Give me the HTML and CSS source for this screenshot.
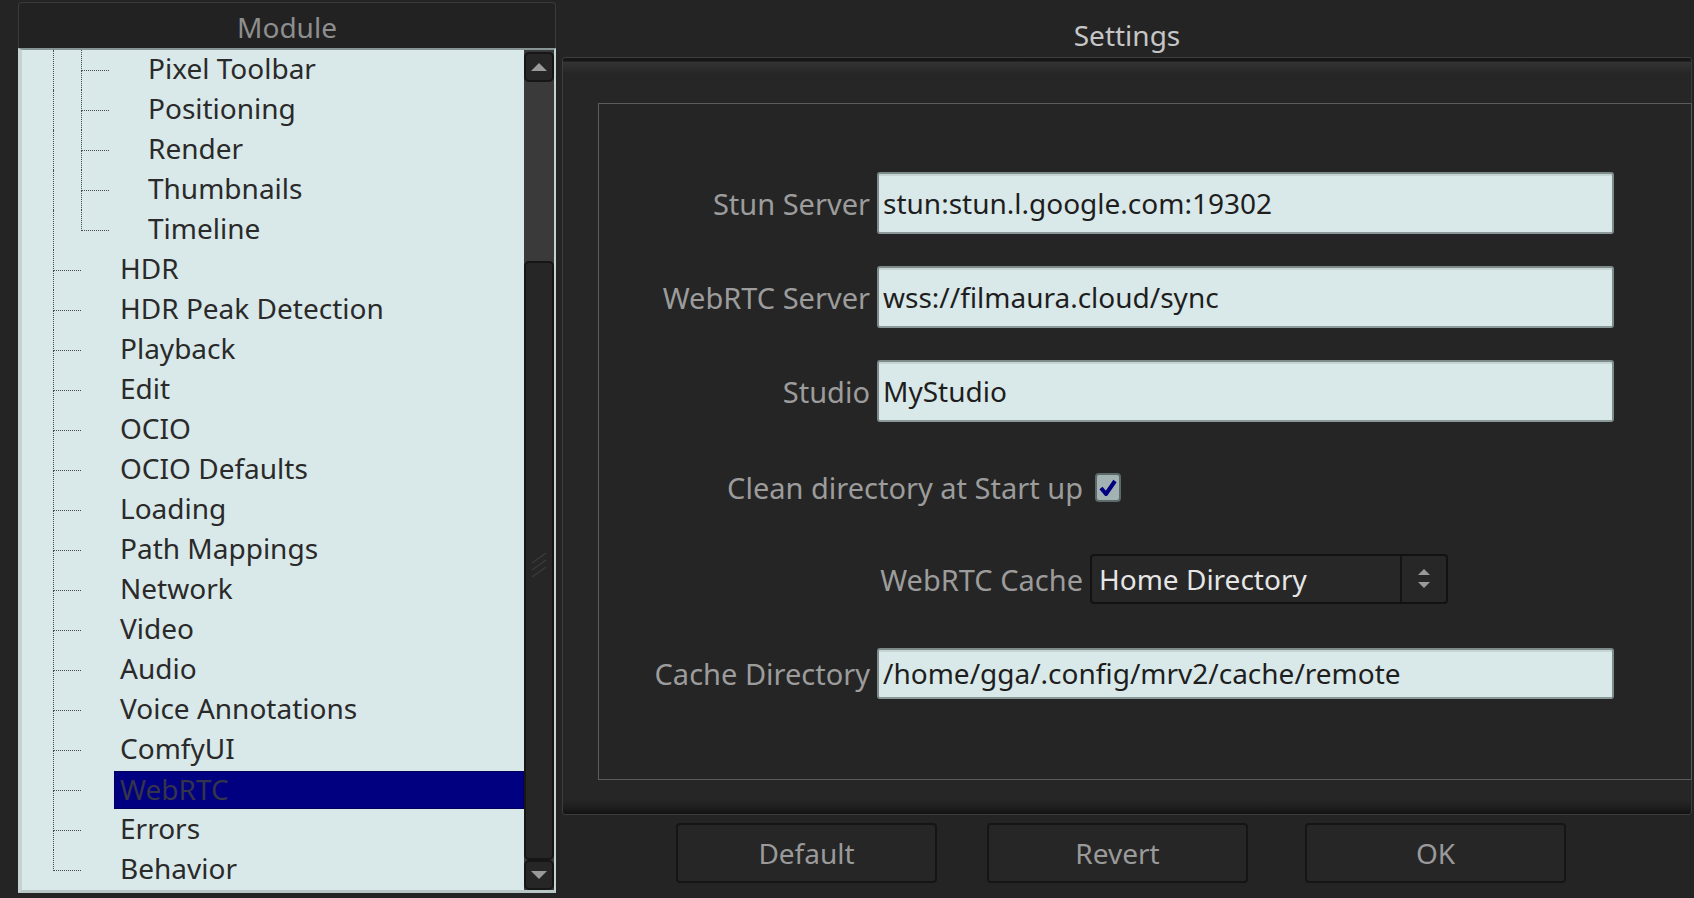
FILE: index.html
```html
<!DOCTYPE html>
<html lang="en">
<head>
    <meta charset="UTF-8">
    <meta name="viewport" content="width=device-width, initial-scale=1.0">
    <title>Preferences</title>
    <link rel="stylesheet" href="styles.css">
</head>
<body>
    <div class="app">
        <div class="modules">
            <div class="modules-title">Module</div>
            <div class="module-list">
                <div class="tree">
                    <div class="row sub"><span class="guide"></span><span class="branch"></span><span class="label">Pixel Toolbar</span></div>
                    <div class="row sub"><span class="guide"></span><span class="branch"></span><span class="label">Positioning</span></div>
                    <div class="row sub"><span class="guide"></span><span class="branch"></span><span class="label">Render</span></div>
                    <div class="row sub"><span class="guide"></span><span class="branch"></span><span class="label">Thumbnails</span></div>
                    <div class="row sub"><span class="guide"></span><span class="branch last"></span><span class="label">Timeline</span></div>
                    <div class="row"><span class="branch"></span><span class="label">HDR</span></div>
                    <div class="row"><span class="branch"></span><span class="label">HDR Peak Detection</span></div>
                    <div class="row"><span class="branch"></span><span class="label">Playback</span></div>
                    <div class="row"><span class="branch"></span><span class="label">Edit</span></div>
                    <div class="row"><span class="branch"></span><span class="label">OCIO</span></div>
                    <div class="row"><span class="branch"></span><span class="label">OCIO Defaults</span></div>
                    <div class="row"><span class="branch"></span><span class="label">Loading</span></div>
                    <div class="row"><span class="branch"></span><span class="label">Path Mappings</span></div>
                    <div class="row"><span class="branch"></span><span class="label">Network</span></div>
                    <div class="row"><span class="branch"></span><span class="label">Video</span></div>
                    <div class="row"><span class="branch"></span><span class="label">Audio</span></div>
                    <div class="row"><span class="branch"></span><span class="label">Voice Annotations</span></div>
                    <div class="row"><span class="branch"></span><span class="label">ComfyUI</span></div>
                    <div class="row"><span class="branch"></span><span class="label selected">WebRTC</span></div>
                    <div class="row"><span class="branch"></span><span class="label">Errors</span></div>
                    <div class="row"><span class="branch last"></span><span class="label">Behavior</span></div>
                </div>
                <div class="scrollbar">
                    <div class="scroll-btn">
                        <svg width="18" height="10" viewBox="0 0 18 10"><polygon points="9,1 17,9 1,9" fill="#9a9a9a"/></svg>
                    </div>
                    <div class="scroll-trough"></div>
                    <div class="scroll-knob">
                        <svg width="18" height="40" viewBox="0 0 18 40"><path d="M2 22 L16 12 M2 29 L16 19 M2 36 L16 26" stroke="#3a3a3a" stroke-width="1.5"/></svg>
                    </div>
                    <div class="scroll-btn">
                        <svg width="18" height="10" viewBox="0 0 18 10"><polygon points="1,1 17,1 9,9" fill="#9a9a9a"/></svg>
                    </div>
                </div>
            </div>
        </div>

        <div class="settings-side">
            <div class="settings-title">Settings</div>
            <div class="settings-frame">
                <div class="settings-group">
                    <div class="field-row">
                        <span class="field-label">Stun Server</span>
                        <div class="text-field">stun:stun.l.google.com:19302</div>
                    </div>
                    <div class="field-row">
                        <span class="field-label">WebRTC Server</span>
                        <div class="text-field">wss://filmaura.cloud/sync</div>
                    </div>
                    <div class="field-row">
                        <span class="field-label">Studio</span>
                        <div class="text-field">MyStudio</div>
                    </div>
                    <div class="field-row check-row">
                        <span class="field-label wide check-label">Clean directory at Start up</span>
                        <span class="checkbox">
                            <svg width="22" height="24" viewBox="0 0 22 24"><polyline points="4,12 9,18 18,5" fill="none" stroke="#000080" stroke-width="4" stroke-linejoin="round"/></svg>
                        </span>
                    </div>
                    <div class="field-row">
                        <span class="field-label wide">WebRTC Cache</span>
                        <div class="choice">
                            <span class="choice-value">Home Directory</span>
                            <span class="choice-spin">
                                <svg width="14" height="20" viewBox="0 0 14 20"><polygon points="7,0 13,6 1,6" fill="#9a9a9a"/><polygon points="1,13 13,13 7,19" fill="#9a9a9a"/></svg>
                            </span>
                        </div>
                    </div>
                    <div class="field-row">
                        <span class="field-label">Cache Directory</span>
                        <div class="text-field short">/home/gga/.config/mrv2/cache/remote</div>
                    </div>
                </div>
            </div>
            <div class="buttons">
                <button class="btn">Default</button>
                <button class="btn">Revert</button>
                <button class="btn btn-ok">OK</button>
            </div>
        </div>
    </div>
</body>
</html>
```

FILE: styles.css
```css
* {
    box-sizing: border-box;
}
body {
    margin: 0;
    background-color: #242424;
    font-family: "Noto Sans", sans-serif;
    font-size: 28px;
    overflow: hidden;
}
.app {
    display: flex;
    height: 898px;
    padding-top: 2px;
}

/* module tree */
.modules {
    width: 538px;
    height: 891px;
    margin-left: 18px;
    display: flex;
    flex-direction: column;
    flex: none;
}
.modules-title {
    height: 46px;
    background-color: #222;
    border: 1px solid #3a3a3a;
    border-bottom: none;
    border-radius: 4px 4px 0 0;
    color: #8e8e8e;
    text-align: center;
    padding-top: 4px;
    line-height: 41px;
}
.module-list {
    flex: 1;
    display: flex;
    background-color: #d9e8e8;
    border-style: solid;
    border-width: 2px 2px 3px 4px;
    border-color: #879595 #c4d2d2 #b8c6c6 #c4d2d2;
    overflow: hidden;
}
.tree {
    flex: 1;
    overflow: hidden;
    color: #2a2a2a;
}
.row {
    display: flex;
    height: 40px;
    padding-left: 31px;
}
.guide {
    width: 28px;
    flex: none;
    border-left: 1px dotted #4a4a4a;
}
.branch {
    width: 28px;
    flex: none;
    display: flex;
    flex-direction: column;
}
.branch::before {
    content: "";
    height: 20px;
    border-left: 1px dotted #4a4a4a;
    border-bottom: 1px dotted #4a4a4a;
}
.branch::after {
    content: "";
    flex: 1;
    border-left: 1px dotted #4a4a4a;
}
.branch.last::after {
    border-left: none;
}
.label {
    flex: 1;
    height: 38px;
    margin: 1px 0 1px 33px;
    padding-left: 6px;
    line-height: 35px;
    white-space: nowrap;
}
.label.selected {
    background-color: #000080;
    border: 1px solid #00005a;
    line-height: 34px;
    padding-left: 5px;
    color: #34344a;
}

/* scrollbar */
.scrollbar {
    width: 30px;
    flex: none;
    display: flex;
    flex-direction: column;
    background-color: #3a3a3a;
    padding-top: 2px;
}
.scroll-btn {
    height: 30px;
    background-color: #262626;
    border: 2px solid #161616;
    border-radius: 5px;
    display: flex;
    align-items: center;
    justify-content: center;
}
.scroll-trough {
    height: 179px;
}
.scroll-knob {
    flex: 1;
    background-color: #262626;
    border: 2px solid #161616;
    border-radius: 5px;
    display: flex;
    align-items: center;
    justify-content: center;
}

/* settings */
.settings-side {
    flex: 1;
    display: flex;
    flex-direction: column;
    padding-left: 6px;
}
.settings-title {
    width: 1130px;
    height: 55px;
    padding-top: 13px;
    line-height: 40px;
    text-align: center;
    color: #c6c6c6;
}
.settings-frame {
    width: 1130px;
    height: 758px;
    border: 1px solid #3d3d3d;
    border-radius: 3px;
    background: linear-gradient(#161616, #161616 3px, #333 4px, #262626 16px, #262626 calc(100% - 14px), #1c1c1c calc(100% - 5px), #121212);
    padding: 45px 0 0 35px;
}
.settings-group {
    height: 677px;
    margin-right: -1px;
    border: 1px solid #5c5c5c;
    padding-top: 52px;
    background-color: #252525;
}
.field-row {
    display: flex;
    align-items: center;
    height: 94px;
}
.field-row.check-row {
    padding-top: 5px;
}
.field-label {
    width: 271px;
    flex: none;
    margin-right: 7px;
    text-align: right;
    color: #9c9c9c;
    font-size: 29px;
    white-space: nowrap;
}
.field-label.wide {
    width: 484px;
}
.field-label.check-label {
    margin-right: 12px;
}
.text-field {
    width: 737px;
    height: 62px;
    display: flex;
    align-items: center;
    padding-left: 4px;
    background-color: #d9e8e8;
    border: 2px solid #7d8b8b;
    border-bottom-color: #8a9898;
    border-radius: 3px;
    box-shadow: inset 0 2px 0 #c6d4d4;
    color: #1e1e1e;
    white-space: nowrap;
}
.text-field.short {
    height: 51px;
}
.checkbox {
    width: 26px;
    height: 29px;
    display: flex;
    align-items: center;
    justify-content: center;
    background-color: #a3b3b3;
    border: 2px solid #5c6a6a;
    border-radius: 4px;
}
.choice {
    width: 358px;
    height: 50px;
    display: flex;
    align-items: center;
    background-color: #272727;
    border: 2px solid #121212;
    border-radius: 4px;
    color: #e6e6e6;
}
.choice-value {
    flex: 1;
    padding-left: 7px;
    white-space: nowrap;
}
.choice-spin {
    width: 46px;
    height: 100%;
    display: flex;
    align-items: center;
    justify-content: center;
    border-left: 2px solid #141414;
}

/* dialog buttons */
.buttons {
    display: flex;
    gap: 50px;
    margin-top: 8px;
    padding-left: 114px;
}
.btn {
    width: 261px;
    height: 60px;
    background-color: #262626;
    border: 2px solid #151515;
    border-radius: 4px;
    color: #9a9a9a;
    font-family: "Noto Sans", sans-serif;
    font-size: 28px;
    padding: 0;
}
.btn-ok {
    margin-left: 7px;
}
```
